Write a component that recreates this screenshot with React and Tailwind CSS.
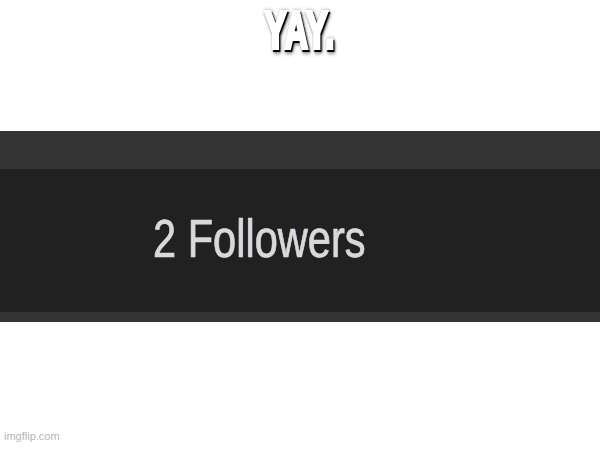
import React from "react";

// Meme caption text: white, heavy, with a soft dark drop edge
const Caption = ({ children }) => (
  <div className="inline-block origin-top scale-x-[0.62] text-[52px] leading-none font-bold tracking-[2px] text-white font-['Liberation_Sans',Arial,sans-serif] [-webkit-text-stroke:4px_white] [paint-order:stroke_fill] [filter:drop-shadow(2px_2px_0.5px_#000)_drop-shadow(1px_1px_2px_rgba(0,0,0,0.6))]">
    {children}
  </div>
);

const FollowerBar = ({ count }) => (
  <div className="w-full">
    <div className="h-[38px] bg-[#333333]" />
    <div className="h-[143px] bg-[#212121] flex items-center">
      <span className="ml-[153px] -mt-[6px] inline-block origin-left scale-x-[0.77] text-[54px] leading-none text-[#d9d9d9] font-['Liberation_Sans',Arial,sans-serif] [-webkit-text-stroke:0.6px_#d9d9d9] [text-shadow:0.7px_0_0_rgba(120,120,255,0.5),-0.7px_0_0_rgba(255,200,120,0.4)]">
        {count} Followers
      </span>
    </div>
    <div className="h-[10px] bg-[#333333]" />
  </div>
);

export default function App() {
  return (
    <div className="relative w-[600px] h-[450px] bg-white overflow-hidden flex flex-col">
      <div className="flex justify-center pt-[4px] h-[131px]">
        <Caption>YAY.</Caption>
      </div>
      <FollowerBar count={2} />
      <span className="absolute left-[4px] bottom-[6px] text-[11px] text-[#b5b5b5] font-['Liberation_Sans',Arial,sans-serif]">
        imgflip.com
      </span>
    </div>
  );
}
